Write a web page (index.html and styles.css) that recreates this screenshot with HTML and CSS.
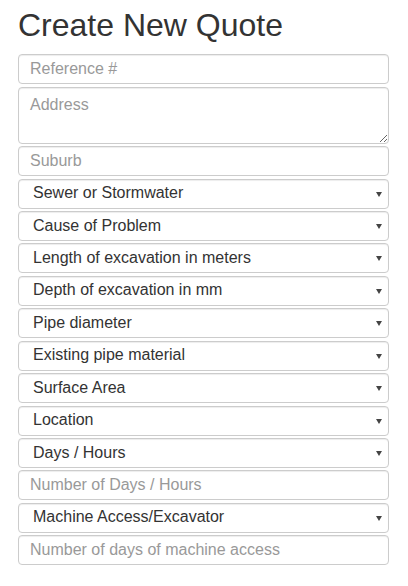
FILE: index.html
```html
<!DOCTYPE html>
<html lang="en">
<head>
<meta charset="utf-8">
<title>Create New Quote</title>
<link rel="stylesheet" href="styles.css">
</head>
<body>
<div class="page">
  <h1 class="title">Create New Quote</h1>
  <form class="quote-form">
    <input class="field" type="text" placeholder="Reference #">
    <textarea class="field field-area" placeholder="Address"></textarea>
    <input class="field" type="text" placeholder="Suburb">
    <div class="select-wrap"><select class="field field-select"><option>Sewer or Stormwater</option></select></div>
    <div class="select-wrap"><select class="field field-select"><option>Cause of Problem</option></select></div>
    <div class="select-wrap"><select class="field field-select"><option>Length of excavation in meters</option></select></div>
    <div class="select-wrap"><select class="field field-select"><option>Depth of excavation in mm</option></select></div>
    <div class="select-wrap"><select class="field field-select"><option>Pipe diameter</option></select></div>
    <div class="select-wrap"><select class="field field-select"><option>Existing pipe material</option></select></div>
    <div class="select-wrap"><select class="field field-select"><option>Surface Area</option></select></div>
    <div class="select-wrap"><select class="field field-select"><option>Location</option></select></div>
    <div class="select-wrap"><select class="field field-select"><option>Days / Hours</option></select></div>
    <input class="field" type="text" placeholder="Number of Days / Hours">
    <div class="select-wrap"><select class="field field-select"><option>Machine Access/Excavator</option></select></div>
    <input class="field" type="text" placeholder="Number of days of machine access">
  </form>
</div>
</body>
</html>
```
FILE: styles.css
```css
* { box-sizing: border-box; }
html, body { margin: 0; padding: 0; background: #fff; }
body {
  font-family: "Liberation Sans", Arial, sans-serif;
  color: #333;
}
.page {
  padding: 8px 19px 0 18px;
}
.title {
  margin: 0 0 11px 0;
  font-size: 32px;
  font-weight: 400;
  line-height: 1.1;
  color: #333;
}
.quote-form {
  display: flex;
  flex-direction: column;
  gap: 2.45px;
}
.field {
  display: block;
  width: 100%;
  height: 30px;
  margin: 0;
  padding: 0 11px;
  font-family: "Liberation Sans", Arial, sans-serif;
  font-size: 16px;
  line-height: 1.42857;
  color: #444;
  background: #fff;
  border: 1px solid #ccc;
  border-radius: 4px;
  box-shadow: inset 0 1px 1px rgba(0,0,0,0.075);
  outline: none;
}
.field::placeholder { color: #999; opacity: 1; }
.field-area {
  height: 57px;
  padding: 6px 11px;
  resize: vertical;
}
.select-wrap {
  position: relative;
}
.field-select {
  -webkit-appearance: none;
  appearance: none;
  padding: 0 24px 0 14px;
  color: #333;
}
.select-wrap::after {
  content: "";
  position: absolute;
  right: 7px;
  top: 13px;
  width: 0;
  height: 0;
  border-left: 3px solid transparent;
  border-right: 3px solid transparent;
  border-top: 5px solid #444;
  pointer-events: none;
}
```
